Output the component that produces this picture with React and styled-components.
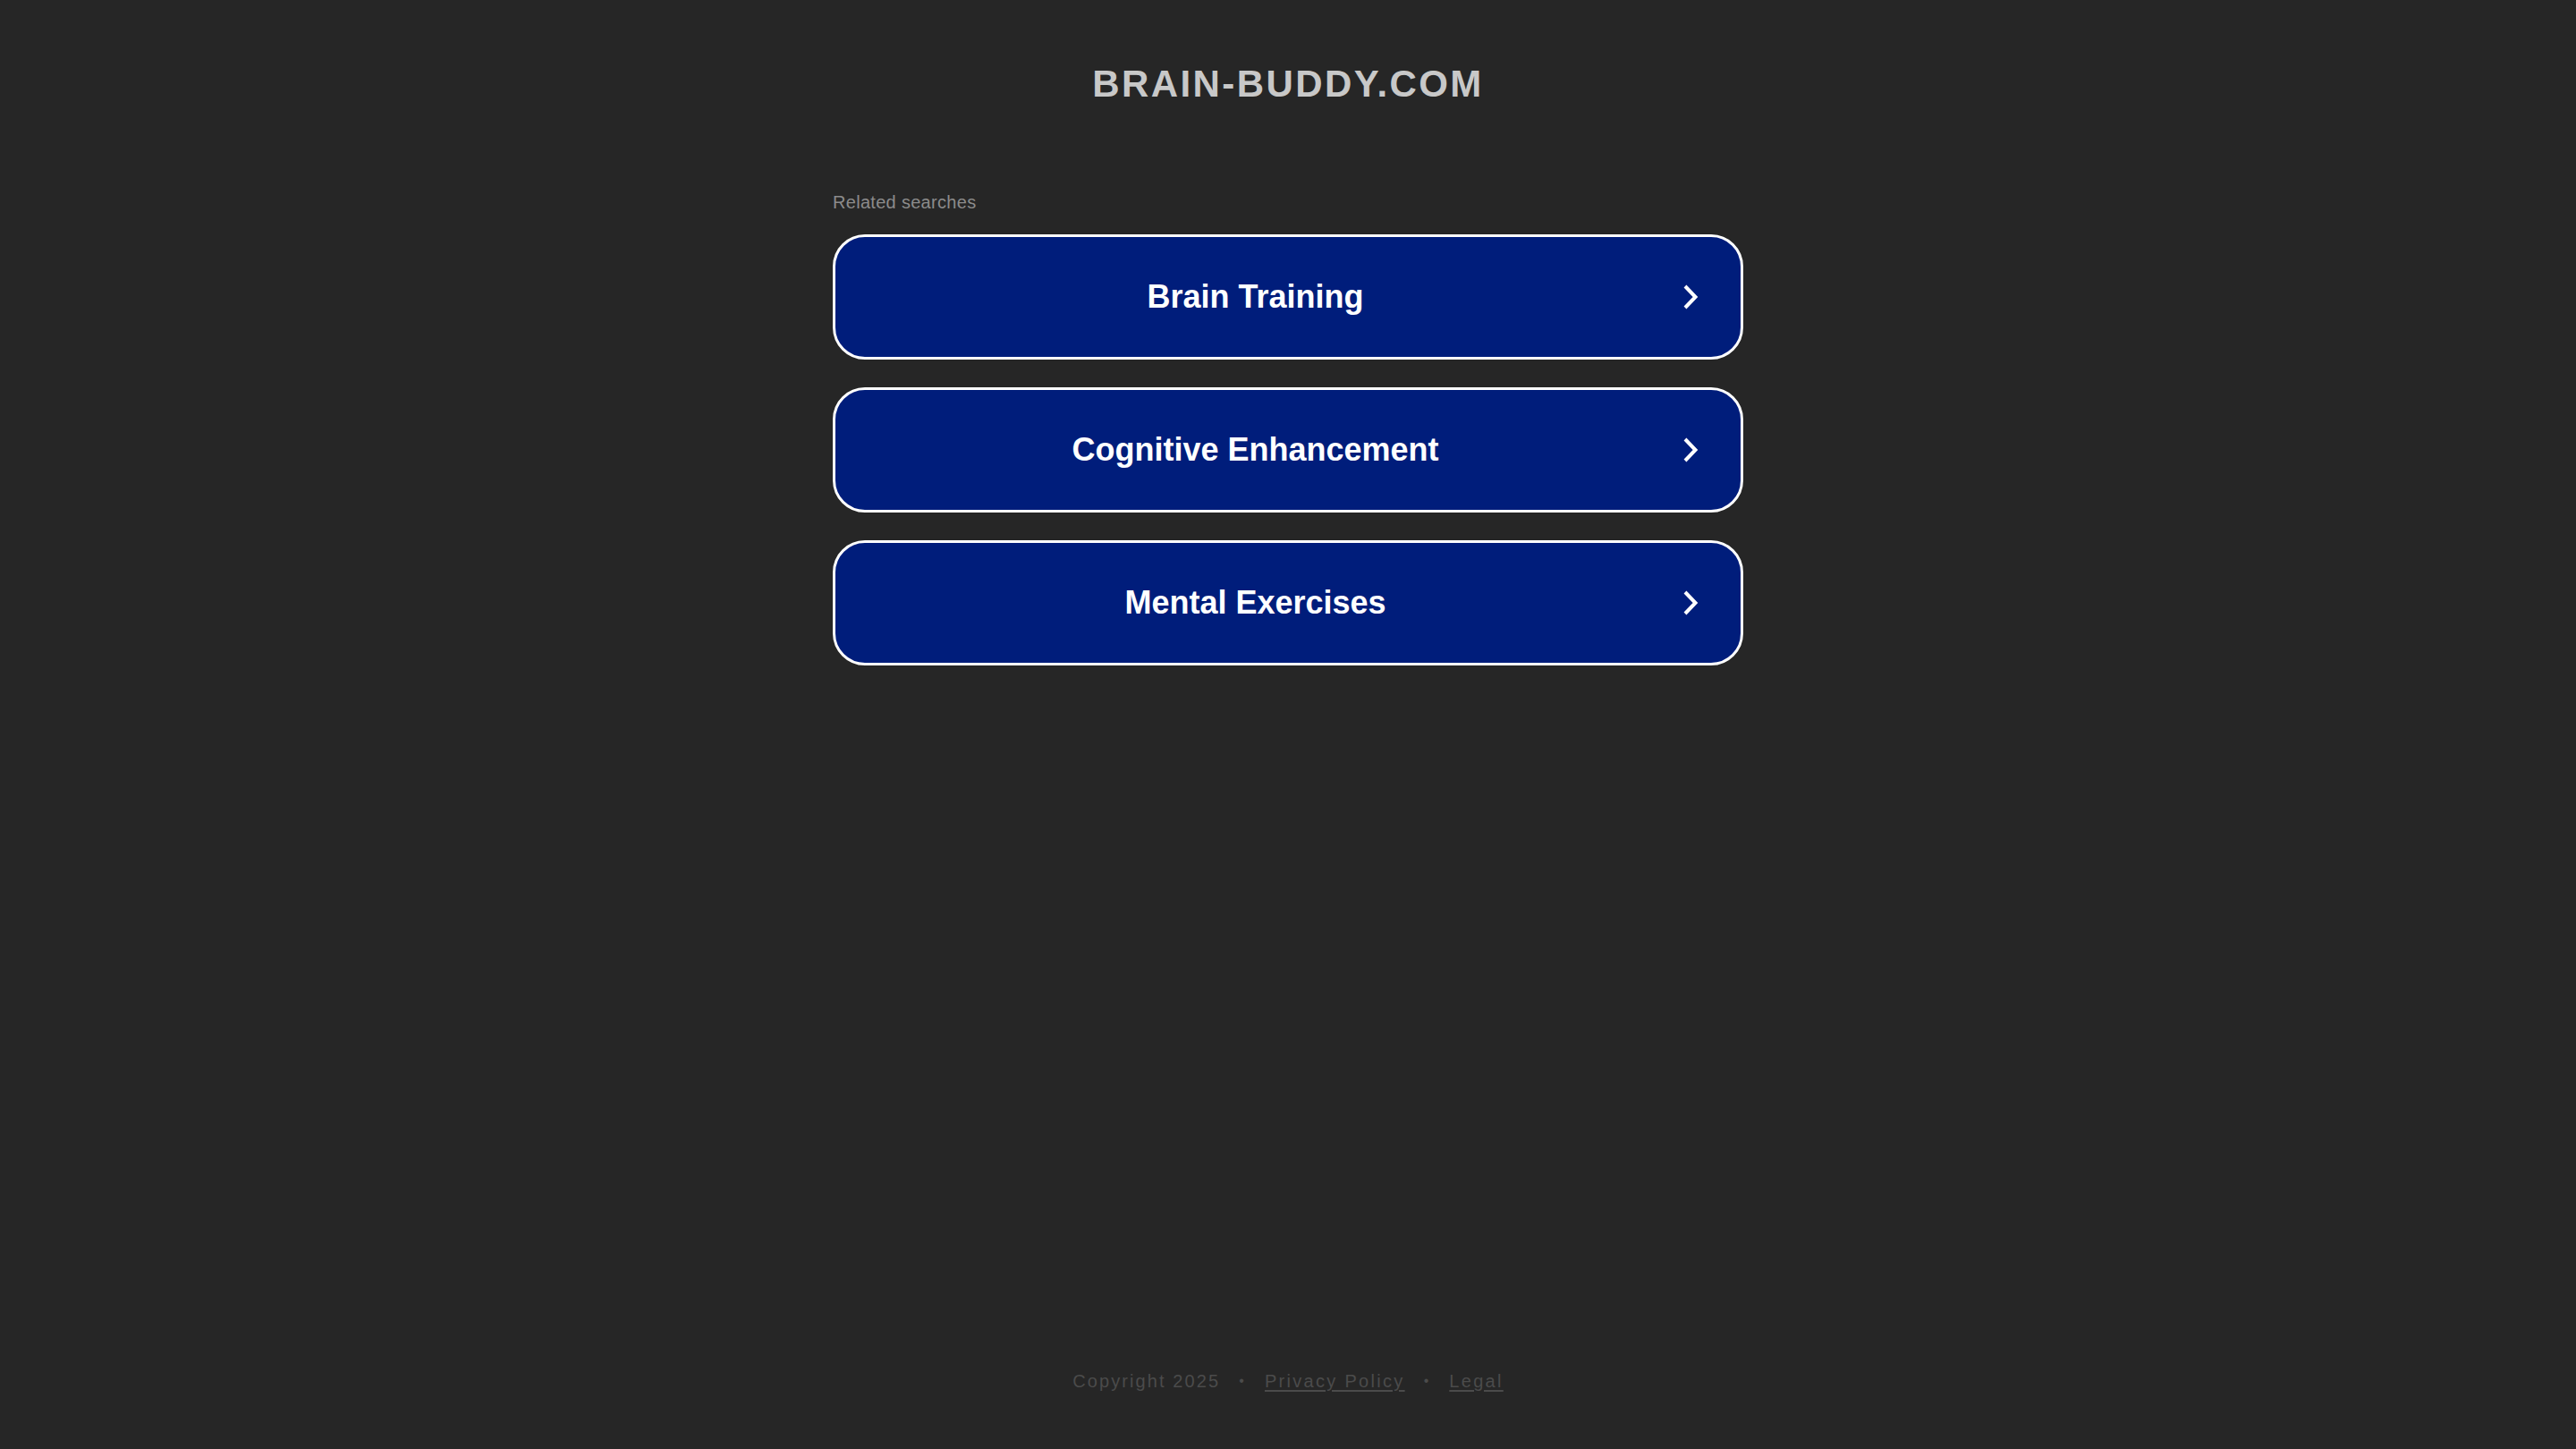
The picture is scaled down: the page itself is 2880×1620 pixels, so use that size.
import React from "react";
import styled, { createGlobalStyle } from "styled-components";

const GlobalStyle = createGlobalStyle`
  html, body {
    margin: 0;
    padding: 0;
    background: #262626;
  }
  body {
    font-family: "Liberation Sans", Arial, Helvetica, sans-serif;
  }
`;

const Page = styled.div`
  display: flex;
  flex-direction: column;
  align-items: center;
  min-height: 100vh;
  box-sizing: border-box;
  padding-top: 69px;
`;

const Domain = styled.h1`
  margin: 0;
  font-size: 42px;
  line-height: 50px;
  font-weight: 700;
  letter-spacing: 2.4px;
  color: #c8c8c8;
  text-align: center;
`;

const Searches = styled.section`
  width: 1018px;
  margin-top: 95px;
  display: flex;
  flex-direction: column;
`;

const SearchesLabel = styled.div`
  font-size: 20px;
  line-height: 24px;
  letter-spacing: 0.3px;
  color: #8b8b8b;
  margin-bottom: 24px;
`;

const LinkList = styled.div`
  display: flex;
  flex-direction: column;
  gap: 31px;
`;

const SearchLink = styled.a`
  display: flex;
  align-items: center;
  box-sizing: border-box;
  height: 140px;
  padding: 0 48px;
  border: 3px solid #ffffff;
  border-radius: 36px;
  background: #001d7b;
  color: #ffffff;
  text-decoration: none;
  cursor: pointer;
`;

const LinkText = styled.span`
  flex: 1;
  text-align: center;
  font-size: 36px;
  font-weight: 700;
  line-height: 40px;
`;

const Chevron = styled.svg`
  flex: none;
  margin-left: 57px;
  overflow: visible;
`;

const Footer = styled.footer`
  margin-top: auto;
  padding-bottom: 64px;
  display: flex;
  align-items: center;
  gap: 21px;
  font-size: 20px;
  line-height: 24px;
  letter-spacing: 2.1px;
  color: #4b4b4b;
`;

const FooterLink = styled.a`
  color: #4b4b4b;
  text-decoration: underline;
  text-underline-offset: 3px;
  letter-spacing: 2.3px;
`;

const Dot = styled.span`
  font-size: 16px;
`;

const searches = ["Brain Training", "Cognitive Enhancement", "Mental Exercises"];

const ChevronIcon = () => (
  <Chevron width="16" height="30" viewBox="0 0 16 30">
    <polyline
      points="2,3 13.5,15 2,27"
      fill="none"
      stroke="#ffffff"
      strokeWidth="4"
      strokeLinejoin="miter"
    />
  </Chevron>
);

const App = () => {
  return (
    <>
      <GlobalStyle />
      <Page>
        <Domain>BRAIN-BUDDY.COM</Domain>
        <Searches>
          <SearchesLabel>Related searches</SearchesLabel>
          <LinkList>
            {searches.map((term) => (
              <SearchLink key={term}>
                <LinkText>{term}</LinkText>
                <ChevronIcon />
              </SearchLink>
            ))}
          </LinkList>
        </Searches>
        <Footer>
          <span>Copyright 2025</span>
          <Dot>•</Dot>
          <FooterLink>Privacy Policy</FooterLink>
          <Dot>•</Dot>
          <FooterLink>Legal</FooterLink>
        </Footer>
      </Page>
    </>
  );
};

export default App;
